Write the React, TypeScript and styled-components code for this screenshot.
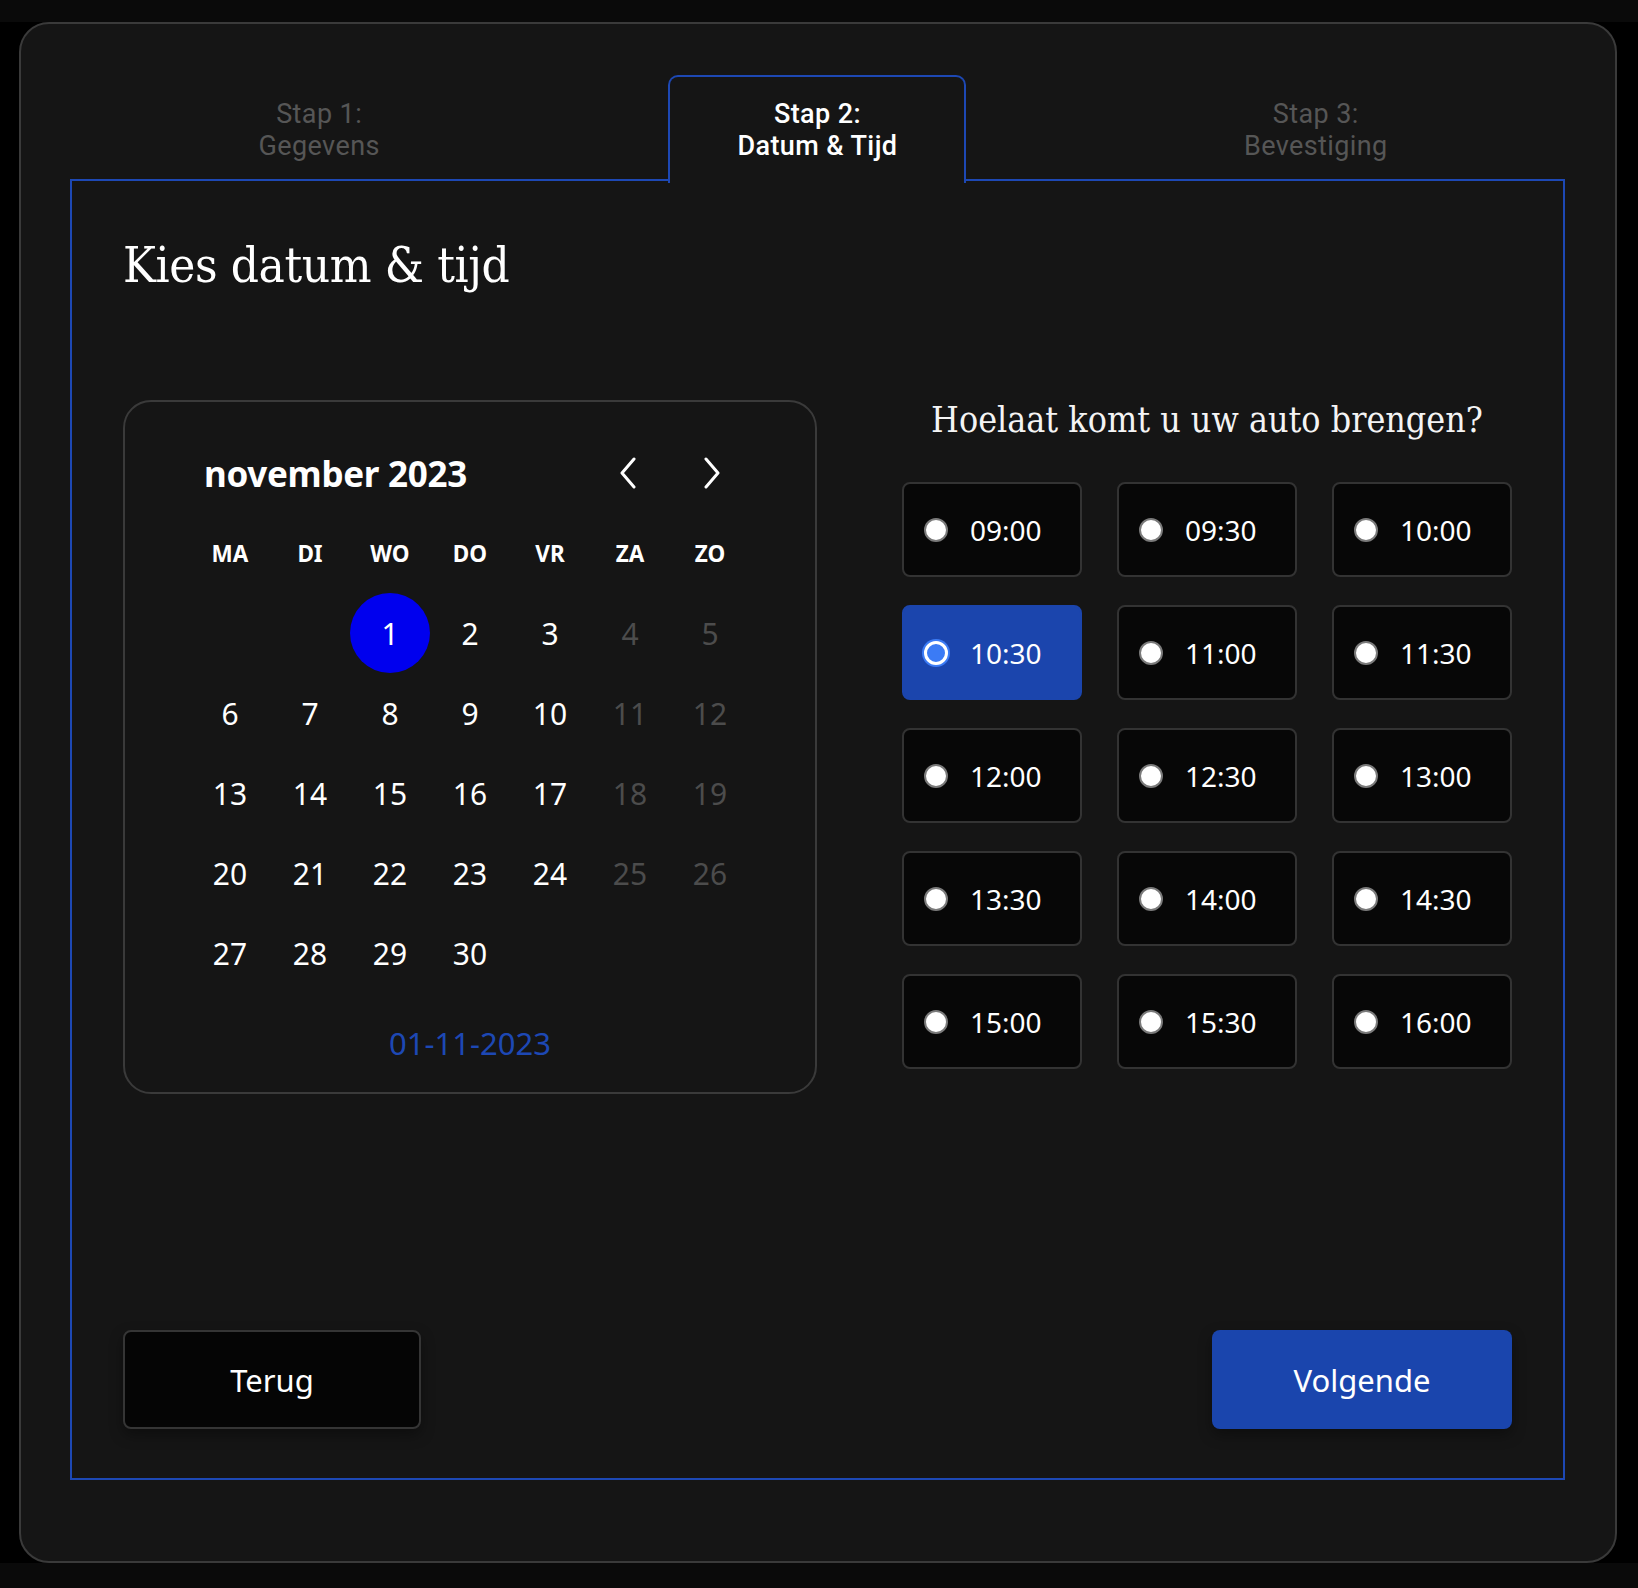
import React from "react";
import styled, { createGlobalStyle } from "styled-components";

const GlobalStyle = createGlobalStyle`
  html, body {
    margin: 0;
    padding: 0;
    background: #0a0a0a;
  }
  body {
    font-family: "Noto Sans", "Open Sans", sans-serif;
    color: #ffffff;
  }
  * { box-sizing: border-box; }
`;

const BLUE = "#1d48b4";

const Stage = styled.div`
  margin-top: 22px;
  background: #000;
  padding: 0 21px 0 19px;
`;

const Card = styled.div`
  height: 1541px;
  background: #151515;
  border: 2px solid #3a3a3a;
  border-radius: 30px;
  padding: 51px 50px 0 49px;
  display: flex;
  flex-direction: column;
`;

const Tabs = styled.div`
  display: flex;
  height: 106px;
  margin-bottom: -2px;
  position: relative;
  z-index: 1;
`;

const TabSlot = styled.div`
  flex: 1;
  display: flex;
  justify-content: center;
`;

const Tab = styled.div<{ $active?: boolean }>`
  width: 298px;
  height: 108px;
  display: flex;
  align-items: center;
  justify-content: center;
  text-align: center;
  font-family: Roboto, "Noto Sans", sans-serif;
  font-size: 27px;
  line-height: 32px;
  letter-spacing: 0.4px;
  padding-bottom: 1px;
  white-space: nowrap;
  color: ${(p) => (p.$active ? "#ffffff" : "#565656")};
  font-weight: ${(p) => (p.$active ? 500 : 400)};
  border: 2px solid ${(p) => (p.$active ? BLUE : "transparent")};
  border-bottom: none;
  border-radius: 10px 10px 0 0;
  background: ${(p) => (p.$active ? "#151515" : "transparent")};
`;

const Panel = styled.div`
  height: 1301px;
  border: 2px solid ${BLUE};
  padding: 51px 51px 49px 51px;
  display: flex;
  flex-direction: column;
`;

const Title = styled.h1`
  margin: 14px 0 0;
  font-family: "DejaVu Serif", serif;
  font-stretch: condensed;
  font-weight: 400;
  font-size: 49px;
  line-height: 40px;
  letter-spacing: -0.4px;
  white-space: nowrap;
  color: #fff;
`;

const Columns = styled.div`
  display: flex;
  justify-content: space-between;
  align-items: flex-start;
  margin-top: 114px;
`;

const CalendarBox = styled.div`
  width: 694px;
  height: 694px;
  border: 2px solid #3a3a3a;
  border-radius: 28px;
  padding-top: 31px;
  display: flex;
  flex-direction: column;
  align-items: center;
`;

const Grid = styled.div`
  display: grid;
  grid-template-columns: repeat(7, 80px);
  grid-auto-rows: 80px;
`;

const MonthTitle = styled.div`
  grid-column: 1 / span 5;
  display: flex;
  align-items: center;
  padding-left: 14px;
  font-size: 35px;
  font-weight: 700;
  letter-spacing: -0.3px;
`;

const NavButton = styled.button<{ $shift: number }>`
  background: none;
  border: none;
  padding: 0;
  display: flex;
  align-items: center;
  justify-content: center;
  margin-left: ${(p) => p.$shift}px;
  cursor: pointer;
`;

const WeekDay = styled.div`
  display: flex;
  align-items: center;
  justify-content: center;
  font-size: 22.5px;
  font-weight: 700;
  color: #fff;
`;

const Day = styled.div<{ $muted?: boolean; $selected?: boolean }>`
  display: flex;
  align-items: center;
  justify-content: center;
  border-radius: 50%;
  font-size: 30px;
  color: ${(p) => (p.$muted ? "#4c4c4c" : "#ffffff")};
  background: ${(p) => (p.$selected ? "#0000ee" : "transparent")};
`;

const SelectedDate = styled.div`
  margin-top: 30px;
  font-size: 31px;
  line-height: 40px;
  color: ${BLUE};
`;

const TimeColumn = styled.div`
  width: 610px;
  display: flex;
  flex-direction: column;
  align-items: center;
`;

const Question = styled.h2`
  margin: 0;
  font-family: "DejaVu Serif", serif;
  font-stretch: condensed;
  font-weight: 300;
  font-size: 35.5px;
  line-height: 40px;
  white-space: nowrap;
  color: #f4f4f4;
`;

const SlotGrid = styled.div`
  margin-top: 42px;
  width: 100%;
  display: grid;
  grid-template-columns: repeat(3, 180px);
  justify-content: space-between;
  row-gap: 28px;
`;

const Slot = styled.label<{ $selected?: boolean }>`
  height: 95px;
  display: flex;
  align-items: center;
  gap: 22px;
  padding-left: 20px;
  border-radius: 8px;
  border: 2px solid ${(p) => (p.$selected ? "#1b45ad" : "#333333")};
  background: ${(p) => (p.$selected ? "#1b45ad" : "#070707")};
  font-size: 28px;
  color: #fff;
  cursor: pointer;
`;

const Radio = styled.span<{ $checked?: boolean }>`
  width: 24px;
  height: 24px;
  border-radius: 50%;
  flex-shrink: 0;
  background: ${(p) => (p.$checked ? "#3b7bf5" : "#ffffff")};
  border: ${(p) => (p.$checked ? "3px solid #ffffff" : "2px solid #7a7a7a")};
  box-shadow: ${(p) => (p.$checked ? "0 0 0 2px #3b7bf5" : "none")};
`;

const Footer = styled.div`
  margin-top: auto;
  display: flex;
  justify-content: space-between;
  align-items: flex-end;
`;

const ActionButton = styled.button<{ $primary?: boolean }>`
  width: ${(p) => (p.$primary ? "300px" : "298px")};
  height: 99px;
  border-radius: 8px;
  border: ${(p) => (p.$primary ? "none" : "2px solid #353535")};
  background: ${(p) => (p.$primary ? "#1a45ad" : "#050505")};
  color: #fff;
  font-family: "Noto Sans", "Open Sans", sans-serif;
  font-size: 31px;
  box-shadow: 0 6px 14px rgba(0, 0, 0, 0.35);
  cursor: pointer;
`;

const Chevron = ({ dir }: { dir: "left" | "right" }) => (
  <svg width="20" height="32" viewBox="0 0 20 32" fill="none">
    <polyline
      points={dir === "left" ? "16,2 4,16 16,30" : "4,2 16,16 4,30"}
      stroke="#fff"
      strokeWidth="3"
      strokeLinecap="round"
      strokeLinejoin="round"
    />
  </svg>
);

const weekDays = ["MA", "DI", "WO", "DO", "VR", "ZA", "ZO"];
const times = [
  "09:00", "09:30", "10:00",
  "10:30", "11:00", "11:30",
  "12:00", "12:30", "13:00",
  "13:30", "14:00", "14:30",
  "15:00", "15:30", "16:00",
];

const steps = [
  { step: "Stap 1:", label: "Gegevens" },
  { step: "Stap 2:", label: "Datum & Tijd", active: true },
  { step: "Stap 3:", label: "Bevestiging" },
];

export default function App() {
  const offset = 2; // November 1, 2023 is a Wednesday
  const cells: (number | null)[] = [];
  for (let i = 0; i < offset; i++) cells.push(null);
  for (let d = 1; d <= 30; d++) cells.push(d);

  return (
    <>
      <GlobalStyle />
      <Stage>
        <Card>
          <Tabs>
            {steps.map((s) => (
              <TabSlot key={s.step}>
                <Tab $active={s.active}>
                  <span>
                    {s.step}
                    <br />
                    {s.label}
                  </span>
                </Tab>
              </TabSlot>
            ))}
          </Tabs>
          <Panel>
            <Title>Kies datum &amp; tijd</Title>
            <Columns>
              <CalendarBox>
                <Grid>
                  <MonthTitle>november 2023</MonthTitle>
                  <NavButton $shift={-4} aria-label="Vorige maand">
                    <Chevron dir="left" />
                  </NavButton>
                  <NavButton $shift={4} aria-label="Volgende maand">
                    <Chevron dir="right" />
                  </NavButton>
                  {weekDays.map((w) => (
                    <WeekDay key={w}>{w}</WeekDay>
                  ))}
                  {cells.map((d, i) => {
                    const col = i % 7;
                    return (
                      <Day key={i} $muted={col >= 5} $selected={d === 1}>
                        {d ?? ""}
                      </Day>
                    );
                  })}
                </Grid>
                <SelectedDate>01-11-2023</SelectedDate>
              </CalendarBox>
              <TimeColumn>
                <Question>Hoelaat komt u uw auto brengen?</Question>
                <SlotGrid>
                  {times.map((t) => (
                    <Slot key={t} $selected={t === "10:30"}>
                      <Radio $checked={t === "10:30"} />
                      <span>{t}</span>
                    </Slot>
                  ))}
                </SlotGrid>
              </TimeColumn>
            </Columns>
            <Footer>
              <ActionButton>Terug</ActionButton>
              <ActionButton $primary>Volgende</ActionButton>
            </Footer>
          </Panel>
        </Card>
      </Stage>
    </>
  );
}
